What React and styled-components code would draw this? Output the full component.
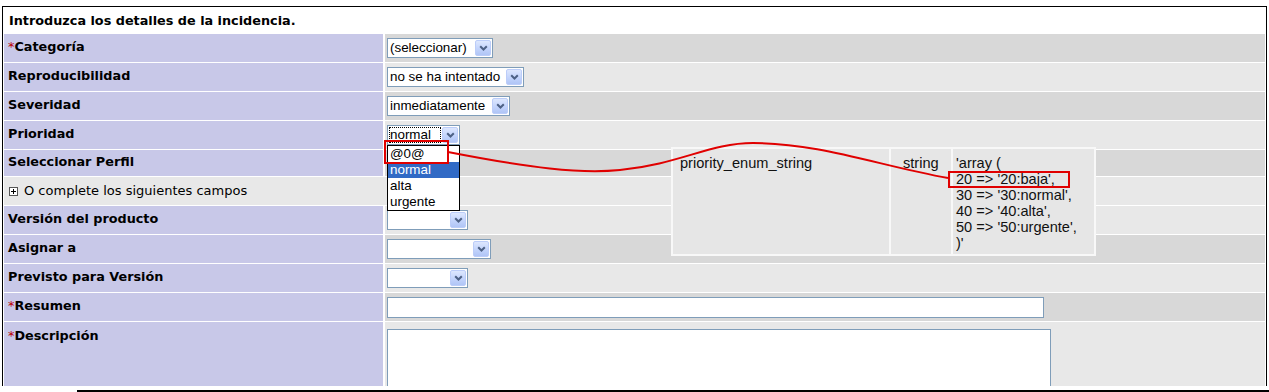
import React from 'react'
import styled, { createGlobalStyle } from 'styled-components'

const GlobalStyle = createGlobalStyle`
  html, body {
    margin: 0;
    padding: 0;
    background: #fff;
  }
  body {
    font-family: "DejaVu Sans", Verdana, sans-serif;
  }
`

const Page = styled.div`
  position: relative;
  width: 1269px;
  height: 392px;
  overflow: hidden;
  padding: 6px 0 0 2px;
  box-sizing: border-box;
`

const Clip = styled.div`
  width: 1265px;
  height: 380px;
  overflow: hidden;
`

const BottomRule = styled.div`
  margin: 4px 0 0 75px;
  height: 2px;
  background: #000;
`

const FormTable = styled.table`
  width: 1265px;
  border: 1px solid #000;
  border-collapse: separate;
  border-spacing: 1px;
  table-layout: fixed;
  background: #fff;
`

const LabelCol = styled.col`
  width: 380px;
`

const TitleCell = styled.td`
  height: 24px;
  padding: 0 0 1px 5px;
  background: #fff;
  font-weight: bold;
  font-size: 12.8px;
  color: #000;
  vertical-align: middle;
`

const Label = styled.td`
  height: ${p => p.$h || 28}px;
  padding: ${p => (p.$top ? '6px 0 0 4px' : '0 0 3px 4px')};
  box-sizing: border-box;
  background: #c8c8e8;
  border-right: 1px solid #fff;
  font-weight: bold;
  font-size: 12.8px;
  color: #000;
  vertical-align: ${p => (p.$top ? 'top' : 'middle')};
  white-space: nowrap;
`

const Value = styled.td`
  padding: ${p => (p.$top ? '7px 0 0 2px' : '0 0 0 2px')};
  background: ${p => (p.$tone === 'dark' ? '#d8d8d8' : '#e8e8e8')};
  vertical-align: ${p => (p.$top ? 'top' : 'middle')};
`

const Required = styled.span`
  color: #bb0000;
  font-weight: normal;
`

const ToggleCell = styled.td`
  height: 28px;
  padding: 0 0 2px 5px;
  box-sizing: border-box;
  background: #e8e8e8;
  font-size: 13px;
  color: #000;
  vertical-align: middle;
`

const ToggleIcon = styled.svg`
  width: 9px;
  height: 9px;
  margin-right: 6px;
  vertical-align: -1px;
`

const SelectBox = styled.div`
  position: relative;
  display: flex;
  width: ${p => p.$width}px;
  height: 20px;
  box-sizing: border-box;
  border: 1px solid #7f9db9;
  background: #fff;
  font-family: "Liberation Sans", Arial, sans-serif;
  font-size: 13.4px;
  color: #000;
`

const SelectText = styled.span`
  flex: 1;
  margin: 1px;
  border: 1px dotted ${p => (p.$focused ? '#000' : 'transparent')};
  line-height: 14px;
  white-space: nowrap;
  overflow: hidden;
`

const ArrowButton = styled.span`
  display: flex;
  align-items: center;
  justify-content: center;
  width: 16px;
  margin: 1px 1px 1px 0;
  box-sizing: border-box;
  border: 1px solid #bccdf9;
  border-radius: 2px;
  background: linear-gradient(180deg, #dde7fe 0%, #c3d4fc 55%, #b0c5f6 100%);
`

const ListBox = styled.div`
  position: absolute;
  top: calc(100% + 1px);
  left: -1px;
  width: ${p => p.$width}px;
  box-sizing: border-box;
  border: 1px solid #000;
  background: #fff;
  z-index: 2;
`

const Option = styled.div`
  height: 16px;
  line-height: 16px;
  padding-left: 2px;
  background: ${p => (p.$selected ? '#316ac5' : '#fff')};
  color: ${p => (p.$selected ? '#fff' : '#000')};
`

const RedBox = styled.div`
  position: absolute;
  box-sizing: border-box;
  border: 2px solid #e00000;
  z-index: 3;
`

const TextInput = styled.div`
  width: ${p => p.$width}px;
  height: ${p => p.$height}px;
  box-sizing: border-box;
  border: 1px solid #7f9db9;
  background: #fff;
`

const Overlay = styled.table`
  position: absolute;
  left: 671px;
  top: 147px;
  border-collapse: separate;
  border-spacing: 2px;
  background: #f8f8f8;
  z-index: 1;
  font-family: "Liberation Sans", Arial, sans-serif;
  font-size: 14.6px;
  color: #111;
`

const OverlayCell = styled.td`
  width: ${p => p.$w}px;
  height: 105px;
  padding: 6px 0 0 ${p => p.$pad}px;
  box-sizing: border-box;
  background: #e6e6e6;
  vertical-align: top;
  line-height: 16px;
  white-space: nowrap;
`

const CodeLine = styled.div`
  position: relative;
`

const Curve = styled.svg`
  position: absolute;
  left: 0;
  top: 0;
  pointer-events: none;
  z-index: 4;
`

const Chevron = () => (
  <svg width="9" height="6" viewBox="0 0 9 6">
    <path d="M1.2 1.2 L4.5 4.5 L7.8 1.2" stroke="#4d6185" strokeWidth="2" fill="none" />
  </svg>
)

const Select = ({ width, value, focused, children }) => (
  <SelectBox $width={width}>
    <SelectText $focused={focused}>{value}</SelectText>
    <ArrowButton>
      <Chevron />
    </ArrowButton>
    {children}
  </SelectBox>
)

const FieldLabel = ({ required, children, ...rest }) => (
  <Label {...rest}>
    {required && <Required>*</Required>}
    {children}
  </Label>
)

const topRows = [
  { label: 'Categoría', required: true, tone: 'dark', width: 106, value: '(seleccionar)' },
  { label: 'Reproducibilidad', tone: 'light', width: 137, value: 'no se ha intentado' },
  { label: 'Severidad', tone: 'dark', width: 123, value: 'inmediatamente' },
]

const lowerRows = [
  { label: 'Versión del producto', tone: 'light', width: 81 },
  { label: 'Asignar a', tone: 'dark', width: 104 },
  { label: 'Previsto para Versión', tone: 'light', width: 81 },
]

const priorities = ['@0@', 'normal', 'alta', 'urgente']

const App = () => {
  return (
    <Page>
      <GlobalStyle />
      <Clip>
        <FormTable>
          <colgroup>
            <LabelCol />
            <col />
          </colgroup>
          <tbody>
            <tr>
              <TitleCell colSpan={2}>Introduzca los detalles de la incidencia.</TitleCell>
            </tr>
            {topRows.map(row => (
              <tr key={row.label}>
                <FieldLabel required={row.required}>{row.label}</FieldLabel>
                <Value $tone={row.tone}>
                  <Select width={row.width} value={row.value} />
                </Value>
              </tr>
            ))}
            <tr>
              <FieldLabel>Prioridad</FieldLabel>
              <Value $tone="light">
                <Select width={73} value="normal" focused>
                  <ListBox $width={73}>
                    {priorities.map(p => (
                      <Option key={p} $selected={p === 'normal'}>{p}</Option>
                    ))}
                  </ListBox>
                  <RedBox style={{ left: -4, top: 14, width: 65, height: 24 }} />
                </Select>
              </Value>
            </tr>
            <tr>
              <FieldLabel $h={26}>Seleccionar Perfil</FieldLabel>
              <Value $tone="dark" />
            </tr>
            <tr>
              <ToggleCell colSpan={2}>
                <ToggleIcon viewBox="0 0 9 9">
                  <rect x="0.5" y="0.5" width="8" height="8" fill="#fff" stroke="#555" />
                  <path d="M2 4.5 H7 M4.5 2 V7" stroke="#000" />
                </ToggleIcon>
                O complete los siguientes campos
              </ToggleCell>
            </tr>
            {lowerRows.map(row => (
              <tr key={row.label}>
                <FieldLabel>{row.label}</FieldLabel>
                <Value $tone={row.tone}>
                  <Select width={row.width} value="" />
                </Value>
              </tr>
            ))}
            <tr>
              <FieldLabel required>Resumen</FieldLabel>
              <Value $tone="dark">
                <TextInput $width={657} $height={21} />
              </Value>
            </tr>
            <tr>
              <FieldLabel required $top $h={90}>Descripción</FieldLabel>
              <Value $tone="light" $top>
                <TextInput $width={664} $height={130} />
              </Value>
            </tr>
          </tbody>
        </FormTable>
      </Clip>
      <BottomRule />

      <Overlay>
        <tbody>
          <tr>
            <OverlayCell $w={216} $pad={7}>priority_enum_string</OverlayCell>
            <OverlayCell $w={60} $pad={12}>string</OverlayCell>
            <OverlayCell $w={141} $pad={3}>
              <CodeLine>'array (</CodeLine>
              <CodeLine>
                20 =&gt; '20:baja',
                <RedBox style={{ left: -8, top: 0, width: 122, height: 17 }} />
              </CodeLine>
              <CodeLine>30 =&gt; '30:normal',</CodeLine>
              <CodeLine>40 =&gt; '40:alta',</CodeLine>
              <CodeLine>50 =&gt; '50:urgente',</CodeLine>
              <CodeLine>)'</CodeLine>
            </OverlayCell>
          </tr>
        </tbody>
      </Overlay>

      <Curve width="1269" height="392" viewBox="0 0 1269 392">
        <path
          d="M448 152 C 530 168, 580 174, 620 170 C 680 164, 710 143, 753 143 C 820 143, 880 166, 948 178"
          stroke="#e00000"
          strokeWidth="2"
          fill="none"
        />
      </Curve>
    </Page>
  )
}

export default App
